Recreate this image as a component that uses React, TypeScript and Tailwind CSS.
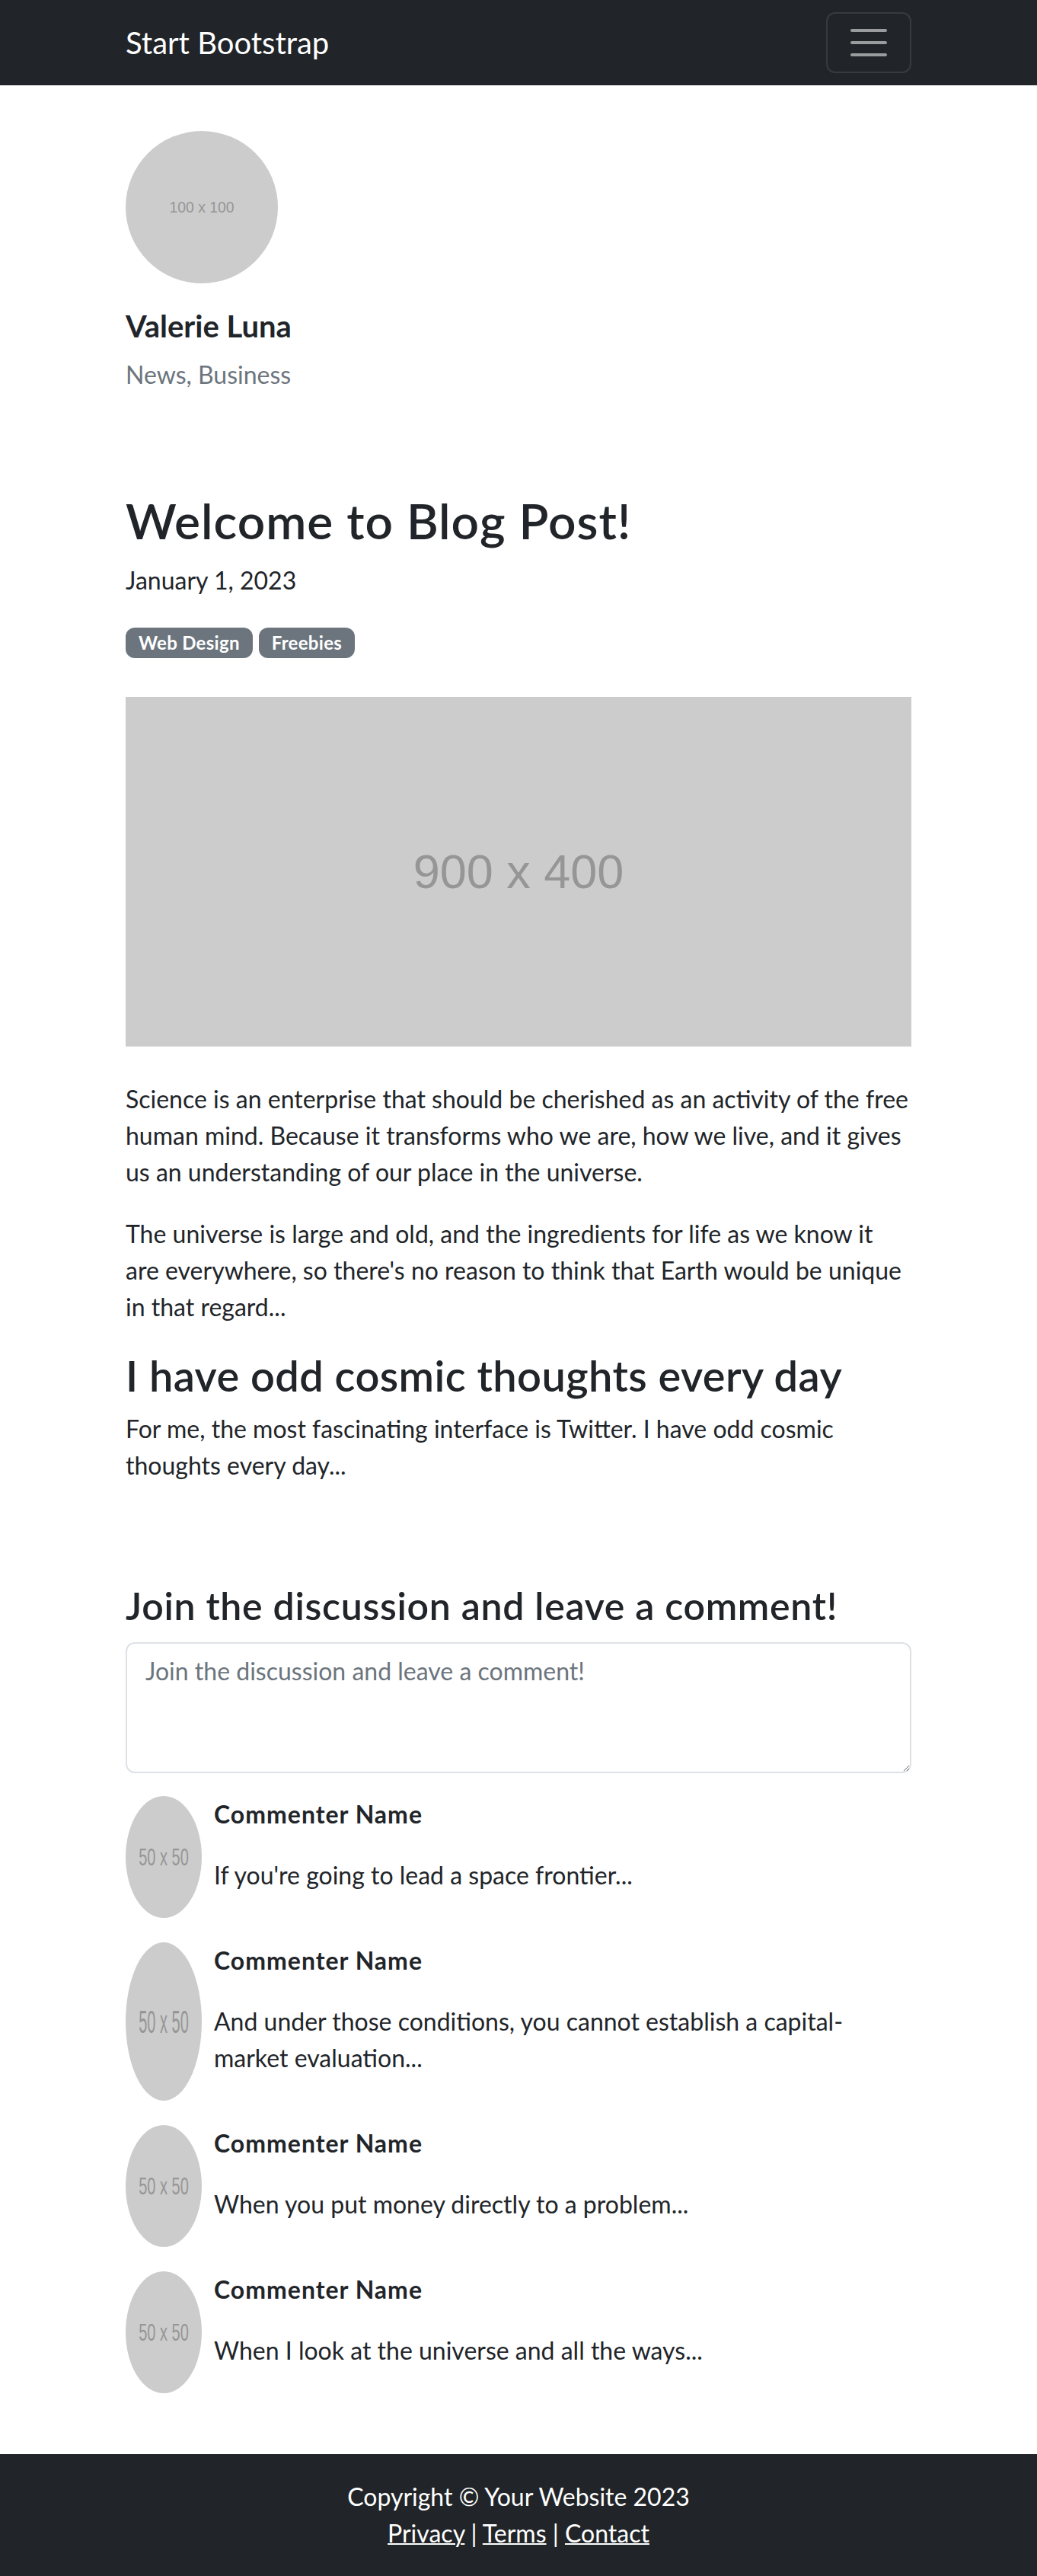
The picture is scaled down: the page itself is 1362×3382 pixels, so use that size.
import React from "react";

const comments = [
  "If you're going to lead a space frontier...",
  "And under those conditions, you cannot establish a capital-market evaluation...",
  "When you put money directly to a problem...",
  "When I look at the universe and all the ways...",
];

function Placeholder({ label, box, size }: { label: string; box: string; size: number }) {
  return (
    <svg className="h-full w-full" viewBox={box} preserveAspectRatio="none">
      <text
        x="50%"
        y="50%"
        textAnchor="middle"
        dominantBaseline="central"
        fontSize={size}
        fill="#969696"
        fontFamily="'Liberation Sans', Arial, sans-serif"
      >
        {label}
      </text>
    </svg>
  );
}

function Comment({ text }: { text: string }) {
  return (
    <div className="flex items-stretch gap-[16px]">
      <div className="w-[100px] shrink-0 overflow-hidden rounded-[50%] bg-[#cccccc]">
        <Placeholder label="50 x 50" box="0 0 50 50" size={10} />
      </div>
      <div className="flex-1 pb-[32px]">
        <div className="text-[32px] font-bold leading-[48px] tracking-[1px]">Commenter Name</div>
        <div className="mt-[32px] text-[32px] leading-[48px]">{text}</div>
      </div>
    </div>
  );
}

export default function App() {
  return (
    <div className="min-h-screen bg-white text-[#212529] font-['Lato',sans-serif]">
      <nav className="h-[112px] bg-[#212529]">
        <div className="mx-auto flex h-full w-[1032px] items-center justify-between">
          <span className="text-[40px] leading-[60px] text-white">Start Bootstrap</span>
          <button className="flex h-[80px] w-[112px] items-center justify-center rounded-[12px] border-2 border-white/10">
            <svg width="60" height="60" viewBox="0 0 30 30">
              <path
                d="M4 7h22M4 15h22M4 23h22"
                stroke="rgba(255,255,255,0.55)"
                strokeWidth="2"
                strokeLinecap="round"
                strokeMiterlimit="10"
              />
            </svg>
          </button>
        </div>
      </nav>

      <main className="mx-auto w-[1032px] pt-[60px] pb-[80px]">
        <div className="h-[200px] w-[200px] overflow-hidden rounded-full bg-[#cccccc]">
          <Placeholder label="100 x 100" box="0 0 100 100" size={9.7} />
        </div>
        <div className="mt-[26px] text-[40px] font-bold leading-[60px]">Valerie Luna</div>
        <div className="mt-[10px] text-[32px] leading-[48px] text-[#6c757d]">News, Business</div>

        <article>
          <h1 className="mt-[129px] text-[64px] font-semibold leading-[77px] tracking-[1px]">Welcome to Blog Post!</h1>
          <div className="mt-[16px] text-[32px] leading-[48px]">January 1, 2023</div>
          <div className="mt-[38px] flex gap-[8px]">
            <span className="flex h-[40px] items-center rounded-[12px] bg-[#6c757d] px-[17px] text-[24px] font-bold leading-none tracking-[0.3px] text-white">
              Web Design
            </span>
            <span className="flex h-[40px] items-center rounded-[12px] bg-[#6c757d] px-[17px] text-[24px] font-bold leading-none tracking-[0.3px] text-white">
              Freebies
            </span>
          </div>
          <div className="mt-[51px] flex h-[459px] items-center justify-center bg-[#cccccc]">
            <span className="font-['Liberation_Sans',Arial,sans-serif] text-[63px] text-[#969696]">900 x 400</span>
          </div>
          <p className="mt-[45px] text-[32px] leading-[48px]">
            Science is an enterprise that should be cherished as an activity of the free human mind. Because it
            transforms who we are, how we live, and it gives us an understanding of our place in the universe.
          </p>
          <p className="mt-[33px] text-[32px] leading-[48px]">
            The universe is large and old, and the ingredients for life as we know it are everywhere, so there's no
            reason to think that Earth would be unique in that regard...
          </p>
          <h2 className="mt-[32px] text-[56px] font-semibold leading-[67px] tracking-[0.4px]">
            I have odd cosmic thoughts every day
          </h2>
          <p className="mt-[13px] text-[32px] leading-[48px]">
            For me, the most fascinating interface is Twitter. I have odd cosmic thoughts every day...
          </p>
        </article>

        <section className="mt-[130px]">
          <h3 className="text-[50px] font-semibold leading-[60px] tracking-[0.7px]">
            Join the discussion and leave a comment!
          </h3>
          <textarea
            rows={3}
            placeholder="Join the discussion and leave a comment!"
            className="mt-[18px] block h-[172px] w-full rounded-[12px] border-2 border-[#dee2e6] px-[24px] py-[12px] text-[32px] leading-[48px] text-[#212529] placeholder:text-[#6c757d] outline-none"
          />
          <div className="mt-[30px] flex flex-col gap-[32px]">
            {comments.map((c, i) => (
              <Comment key={i} text={c} />
            ))}
          </div>
        </section>
      </main>

      <footer className="bg-[#212529] py-[32px] text-center text-[32px] leading-[48px] text-white">
        <div>Copyright © Your Website 2023</div>
        <div>
          <a href="#" className="underline decoration-2">Privacy</a> | <a href="#" className="underline decoration-2">Terms</a> |{" "}
          <a href="#" className="underline decoration-2">Contact</a>
        </div>
      </footer>
    </div>
  );
}
